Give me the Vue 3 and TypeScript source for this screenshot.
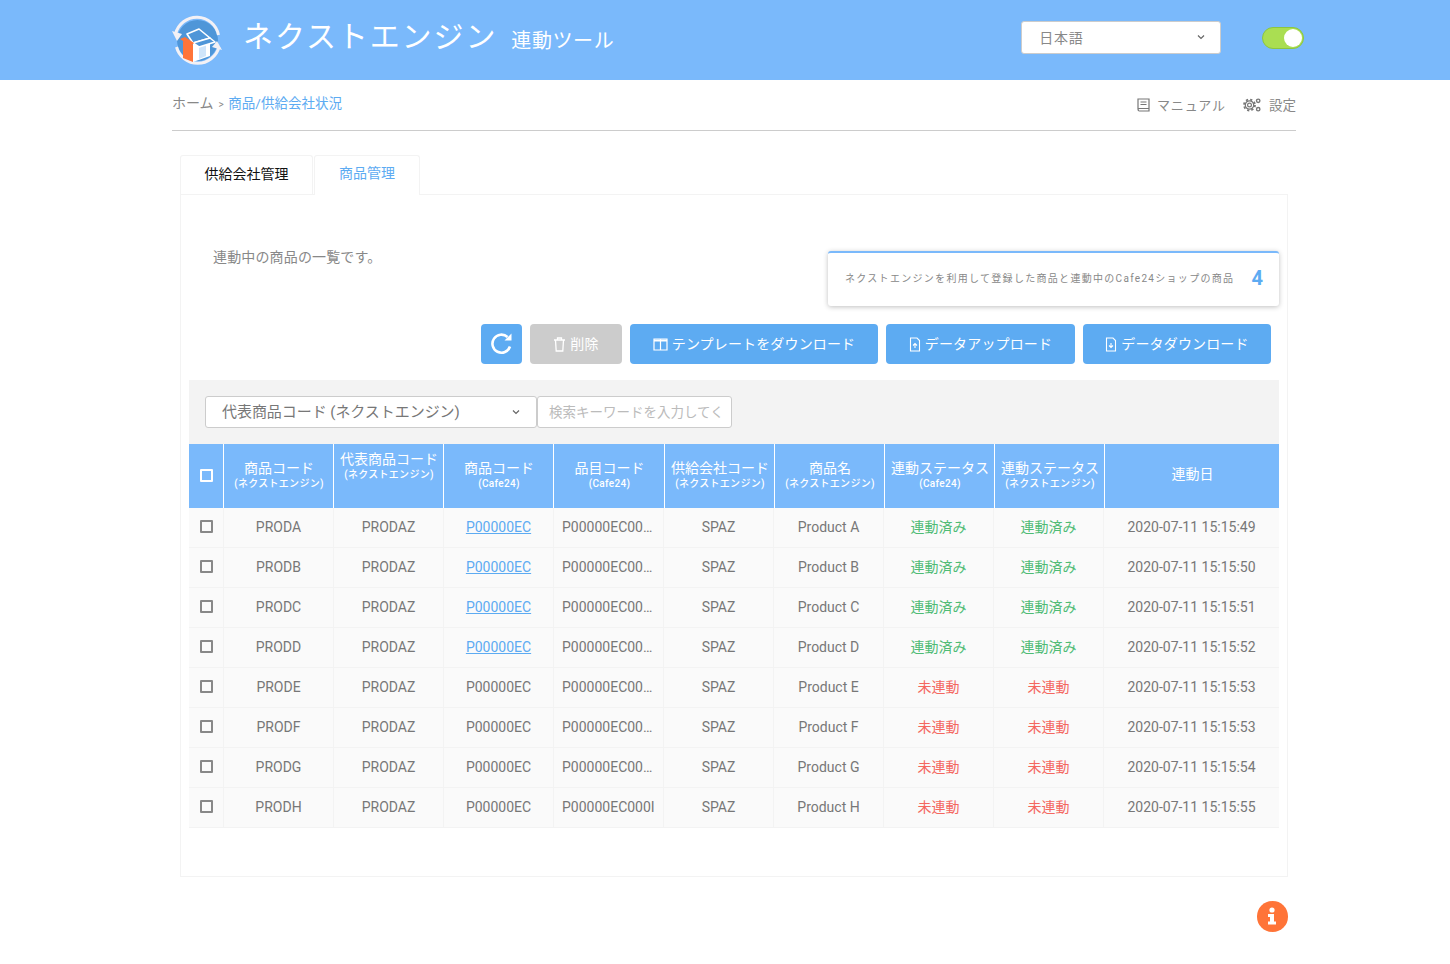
<script setup lang="ts">
interface Row { code: string; linked: boolean; item: string; name: string; done: boolean; date: string }
const letters = ['A', 'B', 'C', 'D', 'E', 'F', 'G', 'H']
const secs = ['49', '50', '51', '52', '53', '53', '54', '55']
const rows: Row[] = letters.map((l, i) => ({
  code: 'PROD' + l,
  linked: i < 4,
  item: i === 7 ? 'P00000EC000I' : 'P00000EC00…',
  name: 'Product ' + l,
  done: i < 4,
  date: '2020-07-11 15:15:' + secs[i],
}))
const heads: { t: string; s?: string; high?: boolean }[] = [
  { t: '商品コード', s: '(ネクストエンジン)' },
  { t: '代表商品コード', s: '(ネクストエンジン)', high: true },
  { t: '商品コード', s: '(Cafe24)' },
  { t: '品目コード', s: '(Cafe24)' },
  { t: '供給会社コード', s: '(ネクストエンジン)' },
  { t: '商品名', s: '(ネクストエンジン)' },
  { t: '連動ステータス', s: '(Cafe24)' },
  { t: '連動ステータス', s: '(ネクストエンジン)' },
  { t: '連動日' },
]
</script>

<template>
  <div class="page">
    <header class="header">
      <svg class="logo" viewBox="0 0 52 52" width="52" height="52">
        <circle cx="26.5" cy="26.5" r="20.5" fill="#4f96d8" />
        <path d="M4.5 20 A22 22 0 0 1 47.5 21" fill="none" stroke="#f3f1f5" stroke-width="3" />
        <path d="M48 33 A22 22 0 0 1 5.5 33" fill="none" stroke="#f3f1f5" stroke-width="3" />
        <path d="M1 17 L11 20 L6 27 Z" fill="#f3f1f5" />
        <path d="M51 36 L41 33 L46 27 Z" fill="#f3f1f5" />
        <path d="M22 29 L39 24 L39 42 L22 48 Z" fill="#fff" />
        <path d="M28 29 L35 27 L35 42 L28 45 Z" fill="#cfe5fa" />
        <path d="M12 27 L22 31 L22 48 L12 44 Z" fill="#ff7438" />
        <path d="M16 20 L28 15 L39 24 L22 29 Z" fill="#4f96d8" stroke="#fff" stroke-width="1.6" stroke-linejoin="round" />
        <path d="M22 29 L39 24 L44 28 L28 33 Z" fill="#4f96d8" stroke="#fff" stroke-width="1.6" stroke-linejoin="round" />
        <path d="M9 25 L14 23 L23 29 L20 32 Z" fill="#ff7438" />
      </svg>
      <span class="title">ネクストエンジン</span>
      <span class="subtitle">連動ツール</span>
      <div class="lang">
        <span>日本語</span>
        <svg width="8" height="6" viewBox="0 0 8 6"><path d="M1 1.5 L4 4.5 L7 1.5" fill="none" stroke="#666" stroke-width="1.2" /></svg>
      </div>
      <div class="toggle"><i></i></div>
    </header>

    <div class="crumbs">
      <div class="crumb-left">
        <span>ホーム</span><span class="gt">&gt;</span><a>商品/供給会社状況</a>
      </div>
      <div class="crumb-right">
        <svg class="book" width="13" height="14" viewBox="0 0 13 14" fill="none" stroke="#777" stroke-width="1.2">
          <path d="M1 11 V1 H12 V13 H2.5 A1.5 1.5 0 0 1 1 11.5 A1.5 1.5 0 0 1 2.5 10.5 H12" />
          <path d="M3.5 4 H9.5 M3.5 6.5 H9.5" />
        </svg>
        <span class="m">マニュアル</span>
        <svg class="gear" width="18" height="14" viewBox="0 0 18 14" fill="none" stroke="#777">
          <circle cx="6.5" cy="7" r="1.9" stroke-width="1.2" />
          <circle cx="6.5" cy="7" r="4.2" stroke-width="1.2" />
          <circle cx="6.5" cy="7" r="5.5" stroke-width="1.8" stroke-dasharray="2.2 2.12" />
          <circle cx="15.2" cy="2.8" r="1.7" stroke-width="1.4" />
          <circle cx="15.2" cy="11.2" r="1.7" stroke-width="1.4" />
        </svg>
        <span class="cfg">設定</span>
      </div>
    </div>

    <div class="tabs">
      <div class="tab">供給会社管理</div>
      <div class="tab active">商品管理</div>
    </div>

    <section class="panel">
      <div class="intro">
        <p>連動中の商品の一覧です。</p>
        <div class="stat">
          <span>ネクストエンジンを利用して登録した商品と連動中のCafe24ショップの商品</span>
          <b>4</b>
        </div>
      </div>

      <div class="actions">
        <button class="btn refresh">
          <svg width="24" height="24" viewBox="0 0 24 24" fill="none" stroke="#fff" stroke-width="2.6">
            <path d="M20 14.5 A9 9 0 1 1 17.5 5" /><path d="M21.5 1.5 V8.5 H14.5 Z" fill="#fff" stroke="none" />
          </svg>
        </button>
        <button class="btn del">
          <svg width="13" height="15" viewBox="0 0 13 15" fill="none" stroke="#fff" stroke-width="1.3">
            <path d="M1 3 H12 M4.5 3 V1 H8.5 V3 M2.5 3 L3.2 14 H9.8 L10.5 3" />
          </svg>
          削除
        </button>
        <button class="btn tpl">
          <svg width="15" height="13" viewBox="0 0 15 13" fill="none" stroke="#fff" stroke-width="1.2">
            <path d="M1 1 H14 V12 H1 Z M7.5 1 V12" /><path d="M1 2.5 H14" stroke-width="2" />
          </svg>
          テンプレートをダウンロード
        </button>
        <button class="btn upload">
          <svg width="12" height="15" viewBox="0 0 11 15" fill="none" stroke="#fff" stroke-width="1.1">
            <path d="M1 1 H7.5 L10 3.5 V14 H1 Z" /><path d="M5.5 11 V6.5 M3.5 8.5 L5.5 6.5 L7.5 8.5" />
          </svg>
          データアップロード
        </button>
        <button class="btn download">
          <svg width="12" height="15" viewBox="0 0 11 15" fill="none" stroke="#fff" stroke-width="1.1">
            <path d="M1 1 H7.5 L10 3.5 V14 H1 Z" /><path d="M5.5 6 V10.5 M3.5 8.5 L5.5 10.5 L7.5 8.5" />
          </svg>
          データダウンロード
        </button>
      </div>

      <div class="search">
        <div class="sel">
          <span>代表商品コード (ネクストエンジン)</span>
          <svg width="8" height="6" viewBox="0 0 8 6"><path d="M1 1.5 L4 4.5 L7 1.5" fill="none" stroke="#666" stroke-width="1.2" /></svg>
        </div>
        <div class="inp">検索キーワードを入力してく</div>
      </div>

      <div class="grid">
        <div class="hrow">
          <div class="hcell chk"><i class="box white"></i></div>
          <div v-for="(h, i) in heads" :key="i" class="hcell" :class="{ high: h.high }">
            <div class="ht">{{ h.t }}</div>
            <div v-if="h.s" class="hs">{{ h.s }}</div>
          </div>
        </div>
        <div v-for="r in rows" :key="r.code" class="row">
          <div class="cell chk"><i class="box"></i></div>
          <div class="cell">{{ r.code }}</div>
          <div class="cell">PRODAZ</div>
          <div class="cell"><a v-if="r.linked" class="link">P00000EC</a><template v-else>P00000EC</template></div>
          <div class="cell item">{{ r.item }}</div>
          <div class="cell">SPAZ</div>
          <div class="cell">{{ r.name }}</div>
          <div class="cell" :class="r.done ? 'ok' : 'ng'">{{ r.done ? '連動済み' : '未連動' }}</div>
          <div class="cell" :class="r.done ? 'ok' : 'ng'">{{ r.done ? '連動済み' : '未連動' }}</div>
          <div class="cell">{{ r.date }}</div>
        </div>
      </div>
    </section>

    <div class="info-wrap">
      <div class="info">
        <svg width="10" height="18" viewBox="0 0 10 18" fill="#fff">
          <circle cx="5" cy="3" r="2.6" /><path d="M1 7 H7 V14.5 H9 V17.5 H1 V14.5 H3 V10 H1 Z" />
        </svg>
      </div>
    </div>
  </div>
</template>

<style>
html, body { margin: 0; background: #fff; }
</style>

<style scoped>
.page { height: 964px; overflow: hidden; font-family: Roboto, "Noto Sans CJK JP", sans-serif; color: #777; font-size: 14px; }
.header { height: 80px; background: #7ab9fb; display: flex; align-items: center; padding-left: 171px; box-sizing: border-box; color: #fff; }
.logo { width: 52px; height: 52px; flex: none; margin-top: -1px; }
.title { font-size: 30px; letter-spacing: 1.9px; margin-left: 20px; margin-top: -12px; }
.subtitle { font-size: 20px; letter-spacing: .6px; margin-left: 14px; margin-top: -2px; }
.lang { width: 200px; height: 33px; box-sizing: border-box; margin-left: 407px; margin-top: -5px; background: #fff; border: 1px solid #ccc; border-radius: 3px; display: flex; align-items: center; justify-content: space-between; padding: 0 15px 2px 17px; color: #888; font-size: 14px; letter-spacing: .7px; }
.toggle { width: 42px; height: 22px; box-sizing: border-box; margin-left: 41px; margin-top: -4px; border-radius: 11px; background: #aade52; border: 1px solid #8cc63f; display: flex; justify-content: flex-end; align-items: center; padding-right: 1px; }
.toggle i { width: 18px; height: 18px; background: #fff; border-radius: 50%; display: block; }

.crumbs { margin: 0 0 0 172px; width: 1124px; height: 51px; box-sizing: border-box; border-bottom: 1px solid #ccc; display: flex; justify-content: space-between; padding-top: 12px; font-size: 14px; }
.crumb-left { color: #888; }
.crumb-left a { color: #5dabf2; font-size: 13.5px; }
.gt { font-size: 10px; margin: 0 4.5px 0 5px; }
.crumb-right { display: flex; align-items: center; height: 24px; font-size: 13px; color: #888; }
.crumb-right .book { margin-right: 7px; margin-top: 2px; }
.m { margin-right: 17px; letter-spacing: .9px; }
.crumb-right .gear { margin-right: 8px; margin-top: 2px; }
.cfg { font-size: 13.5px; }

.tabs { display: flex; margin: 24px 0 0 180px; height: 40px; position: relative; z-index: 1; }
.tab { box-sizing: border-box; height: 39px; padding-bottom: 5px; border: 1px solid #f3f3f3; border-bottom: 0; border-radius: 3px 3px 0 0; color: #111; font-size: 14px; display: flex; align-items: center; justify-content: center; width: 133px; }
.tab.active { color: #5dabf2; width: 106px; height: 40px; padding-bottom: 7px; background: #fff; margin-left: 1px; }

.panel { margin: -1px 0 0 180px; width: 1108px; height: 683px; box-sizing: border-box; border: 1px solid #f3f3f3; padding: 0 8px; }
.intro { height: 111px; display: flex; justify-content: space-between; align-items: flex-start; padding-top: 56px; box-sizing: border-box; }
.intro p { margin: -1px 0 0 24px; font-size: 14px; line-height: 14px; letter-spacing: .15px; color: #888; }
.stat { box-sizing: border-box; width: 451px; height: 55px; border-top: 2px solid #7ab9fb; border-radius: 3px; box-shadow: 0 1px 5px rgba(0, 0, 0, .25); display: flex; align-items: center; justify-content: space-between; padding: 0 16px 4px 17px; font-size: 10px; letter-spacing: 1.3px; color: #888; background: #fff; }
.stat b { color: #5dabf2; font-size: 20px; letter-spacing: 0; }

.actions { display: flex; justify-content: flex-end; gap: 8px; height: 40px; margin-top: 18px; padding-right: 8px; }
.btn { height: 40px; border: 0; border-radius: 4px; background: #5dabf2; color: #fff; font: inherit; font-size: 14px; letter-spacing: .15px; display: flex; align-items: center; justify-content: center; gap: 4px; padding: 0 0 3px; }
.btn svg { margin-top: 3px; }
.refresh { width: 41px; padding: 0; }
.refresh svg { margin-top: 0; }
.del { width: 92px; background: #ccc; }
.tpl { width: 248px; }
.upload { width: 189px; }
.download { width: 188px; }

.search { height: 64px; margin-top: 16px; background: #f3f3f3; display: flex; align-items: center; padding-left: 16px; box-sizing: border-box; }
.sel { width: 332px; height: 32px; box-sizing: border-box; background: #fff; border: 1px solid #ccc; border-radius: 3px; display: flex; align-items: center; justify-content: space-between; padding: 0 16px 3px; font-size: 15px; letter-spacing: -.05px; }
.sel svg { margin-top: 3px; }
.inp { width: 195px; height: 32px; box-sizing: border-box; background: #fff; border: 1px solid #ccc; border-radius: 3px; display: flex; align-items: center; padding: 0 0 2px 11px; color: #bbb; font-size: 13.5px; white-space: nowrap; overflow: hidden; }

.grid { width: 1090px; }
.hrow { display: grid; grid-template-columns: 34px 110px 110px 110px 111px 110px 110px 110px 110px 1fr; height: 64px; background: #7ab9fb; color: #fff; }
.row { display: grid; grid-template-columns: 34px 110px 110px 110px 110px 110px 110px 110px 110px 1fr; height: 40px; background: #fafafa; border-bottom: 1px solid #f3f3f3; box-sizing: border-box; }
.hcell { border-left: 1px solid #fff; display: flex; flex-direction: column; align-items: center; justify-content: center; padding: 0 0 2px 1px; }
.hcell:first-child { border-left: 0; padding-left: 0; }
.hcell.high { justify-content: flex-start; padding-top: 7px; }
.ht { font-size: 14px; line-height: 16px; margin-bottom: 2px; white-space: nowrap; }
.hs { font-size: 10px; line-height: 12px; white-space: nowrap; letter-spacing: .3px; font-weight: 500; }
.cell { border-left: 1px solid #f3f3f3; display: flex; align-items: center; justify-content: center; white-space: nowrap; overflow: hidden; padding-bottom: 2px; }
.cell:first-child { border-left: 0; }
.cell.item { justify-content: flex-start; padding-left: 8px; }
.hcell.chk { padding-bottom: 1px; }
.cell.chk { padding-bottom: 3px; }
.box { width: 13px; height: 13px; box-sizing: border-box; border: 2px solid #888; border-radius: 1px; display: block; }
.box.white { border-color: #fff; }
.link { color: #5dabf2; text-decoration: underline; }
.ok { color: #4fbb74; padding-bottom: 4px; }
.ng { color: #f4675f; padding-bottom: 4px; }

.info-wrap { display: flex; justify-content: flex-end; width: 1287.5px; margin-top: 24px; }
.info { width: 30.6px; height: 30.6px; border-radius: 50%; background: #ff7438; display: flex; align-items: center; justify-content: center; }
</style>
